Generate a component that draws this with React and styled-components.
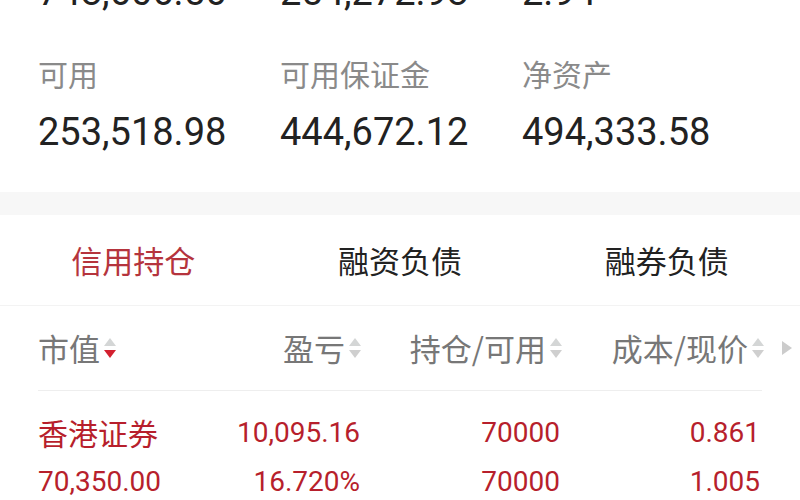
import styled, { createGlobalStyle } from "styled-components";

const GlobalStyle = createGlobalStyle`
  html, body {
    margin: 0;
    padding: 0;
    background: #ffffff;
    overflow: hidden;
  }
  body {
    font-family: Roboto, "Noto Sans CJK SC", sans-serif;
  }
`;

const RED = "#b71f2c";

const Page = styled.div`
  width: 800px;
  height: 500px;
  overflow: hidden;
  background: #ffffff;
`;

const Summary = styled.div`
  padding: 0 38px;
  display: grid;
  grid-template-columns: 242px 242px 242px;
`;

const SummaryValue = styled.div`
  font-family: Roboto, sans-serif;
  font-size: 38px;
  height: 46px;
  line-height: 46px;
  color: #222222;
  white-space: nowrap;
  margin-top: ${(p) => p.$top || 0}px;
`;

const SummaryLabel = styled.div`
  font-family: "Noto Sans CJK SC", sans-serif;
  font-size: 30px;
  height: 40px;
  line-height: 40px;
  color: #8a8a8a;
  margin-top: 38px;
`;

const Band = styled.div`
  height: 23px;
  margin-top: 37px;
  background: #f7f7f7;
`;

const Tabs = styled.div`
  display: grid;
  grid-template-columns: repeat(3, 1fr);
  height: 90px;
  border-bottom: 1px solid #f3f3f3;
`;

const Tab = styled.div`
  font-family: "Noto Sans CJK SC", sans-serif;
  font-size: 31px;
  line-height: 90px;
  text-align: center;
  color: ${(p) => (p.$active ? "#b5343d" : "#222222")};
`;

const Table = styled.div`
  padding-left: 38px;
`;

const HeaderRow = styled.div`
  display: grid;
  grid-template-columns: 160px 164px 201px 202px 35px;
  height: 84px;
  align-items: center;
  margin-right: 38px;
  border-bottom: 1px solid #eeeeee;
`;

const HeaderCell = styled.div`
  font-family: "Noto Sans CJK SC", sans-serif;
  font-size: 31px;
  line-height: 84px;
  color: #777777;
  display: flex;
  align-items: center;
  justify-content: ${(p) => (p.$left ? "flex-start" : "flex-end")};
  white-space: nowrap;
`;

const SortIcon = styled.svg`
  width: 14px;
  height: 26px;
  margin-left: 3px;
  flex-shrink: 0;
`;

const More = styled.svg`
  width: 12px;
  height: 16px;
  margin-left: 16px;
`;

const Rows = styled.div`
  padding-top: 17px;
`;

const DataRow = styled.div`
  display: grid;
  grid-template-columns: 160px 162px 200px 200px;
  height: 49px;
  align-items: center;
`;

const DataCell = styled.div`
  font-family: ${(p) =>
    p.$cjk ? `"Noto Sans CJK SC", sans-serif` : "Roboto, sans-serif"};
  font-size: ${(p) => (p.$cjk ? "30px" : "28px")};
  line-height: 49px;
  color: ${RED};
  text-align: ${(p) => (p.$left ? "left" : "right")};
  white-space: nowrap;
`;

const Sort = ({ down }) => (
  <SortIcon viewBox="0 0 14 26">
    <polygon points="7,3 13,11 1,11" fill="#d4d6d6" />
    <polygon points="1,15 13,15 7,23" fill={down ? "#d3202f" : "#cfcfcf"} />
  </SortIcon>
);

const top = ["748,606.56", "254,272.98", "2.94"];
const summary = [
  { label: "可用", value: "253,518.98" },
  { label: "可用保证金", value: "444,672.12" },
  { label: "净资产", value: "494,333.58" },
];

const rows = [
  ["香港证券", "10,095.16", "70000", "0.861"],
  ["70,350.00", "16.720%", "70000", "1.005"],
];

export default function App() {
  return (
    <Page>
      <GlobalStyle />
      <Summary>
        {top.map((v) => (
          <SummaryValue key={v} $top={-31}>
            {v}
          </SummaryValue>
        ))}
        {summary.map((s) => (
          <SummaryLabel key={s.label}>{s.label}</SummaryLabel>
        ))}
        {summary.map((s) => (
          <SummaryValue key={s.value} $top={16}>
            {s.value}
          </SummaryValue>
        ))}
      </Summary>
      <Band />
      <Tabs>
        <Tab $active>信用持仓</Tab>
        <Tab>融资负债</Tab>
        <Tab>融券负债</Tab>
      </Tabs>
      <Table>
        <HeaderRow>
          <HeaderCell $left>
            市值
            <Sort down />
          </HeaderCell>
          <HeaderCell>
            盈亏
            <Sort />
          </HeaderCell>
          <HeaderCell>
            持仓/可用
            <Sort />
          </HeaderCell>
          <HeaderCell>
            成本/现价
            <Sort />
          </HeaderCell>
          <HeaderCell $left>
            <More viewBox="0 0 12 16">
              <polygon points="1,1 11,8 1,15" fill="#cccccc" />
            </More>
          </HeaderCell>
        </HeaderRow>
        <Rows>
          {rows.map((r, i) => (
            <DataRow key={i}>
              {r.map((c, j) => (
                <DataCell key={j} $left={j === 0} $cjk={i === 0 && j === 0}>
                  {c}
                </DataCell>
              ))}
            </DataRow>
          ))}
        </Rows>
      </Table>
    </Page>
  );
}
